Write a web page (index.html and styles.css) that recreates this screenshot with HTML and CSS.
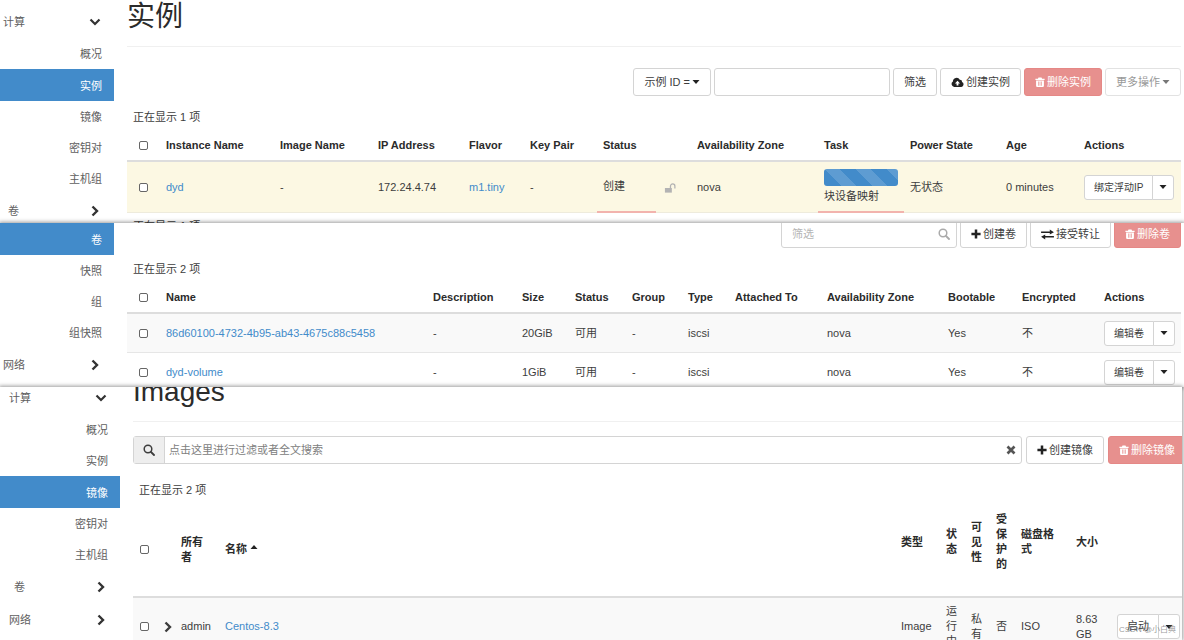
FILE: index.html
```html
<!DOCTYPE html>
<html lang="zh-CN">
<head>
<meta charset="utf-8">
<title>实例</title>
<link rel="stylesheet" href="styles.css">
</head>
<body>
<svg class="defs" aria-hidden="true">
  <symbol id="down" viewBox="0 0 12 12"><path d="M1.500 3.500 6 8l4.500-4.500" fill="none" stroke="currentColor" stroke-width="2.200"/></symbol>
  <symbol id="right" viewBox="0 0 12 12"><path d="M3.500 1.500 8 6l-4.500 4.500" fill="none" stroke="currentColor" stroke-width="2.400"/></symbol>
  <symbol id="caret" viewBox="0 0 8 4"><path d="M0.500 0h7L4 4z" fill="currentColor"/></symbol>
  <symbol id="trash" viewBox="0 0 12 12"><path d="M4.200 0.500h3.600l.7 1.500H11.500v1.700H.5V2h3zM1.300 4.200h9.400v6.300q0 1.500-1.300 1.500H2.600q-1.300 0-1.300-1.500zM3.600 5.500v5h.8v-5zm2 0v5h.8v-5zm2 0v5h.8v-5z" fill="currentColor" fill-rule="evenodd"/></symbol>
  <symbol id="cloud" viewBox="0 0 14 12"><path d="M3.300 10.800A3.200 3.200 0 0 1 2 4.900 4 4 0 0 1 9.500 3a2.400 2.400 0 0 1 2.500 2.500 2.800 2.800 0 0 1-.8 5.300zM7 4 4.200 7H6v2.200h2V7h1.800z" fill="currentColor" fill-rule="evenodd"/></symbol>
  <symbol id="plus" viewBox="0 0 12 12"><path d="M6 .5v11M.5 6h11" stroke="currentColor" stroke-width="3"/></symbol>
  <symbol id="swap" viewBox="0 0 14 12"><path d="M0 2.600h9.500V.500L14 3.500 9.500 6V4.400H0zM14 9.400H4.500v2.100L0 8.500 4.500 6v1.600H14z" fill="currentColor"/></symbol>
  <symbol id="search" viewBox="0 0 12 12"><circle cx="5" cy="5" r="3.800" fill="none" stroke="currentColor" stroke-width="1.500"/><path d="m8 8 3 3" stroke="currentColor" stroke-width="1.800" stroke-linecap="round"/></symbol>
  <symbol id="close" viewBox="0 0 12 12"><path d="m2.500 2.500 7 7m0-7-7 7" stroke="currentColor" stroke-width="2.700"/></symbol>
  <symbol id="unlock" viewBox="0 0 13 12"><path d="M1 6h7.500v5H1z" fill="currentColor"/><path d="M7 6V4a2.400 2.400 0 0 1 4.800 0v2.500" fill="none" stroke="currentColor" stroke-width="1.400"/></symbol>
</svg>

<section class="panel">
  <nav class="side" aria-label="实例导航">
    <button class="group">计算<svg class="ic"><use href="#down"/></svg></button>
    <a href="#">概况</a>
    <a href="#" class="active">实例</a>
    <a href="#">镜像</a>
    <a href="#">密钥对</a>
    <a href="#">主机组</a>
    <button class="group sub">卷<svg class="ic"><use href="#right"/></svg></button>
  </nav>
  <main class="main">
    <h1>实例</h1>
    <div class="toolbar">
      <button class="btn">示例 ID =<svg class="caret"><use href="#caret"/></svg></button>
      <input class="field" type="text" aria-label="示例 ID">
      <button class="btn">筛选</button>
      <button class="btn"><svg class="ic wide"><use href="#cloud"/></svg>创建实例</button>
      <button class="btn danger"><svg class="ic small"><use href="#trash"/></svg>删除实例</button>
      <button class="btn muted">更多操作<svg class="caret"><use href="#caret"/></svg></button>
    </div>
    <p class="count">正在显示 1 项</p>
    <table class="instances">
      <colgroup><col class="pick"><col class="name"><col class="image"><col class="ip"><col class="flavor"><col class="key"><col class="status"><col class="lock"><col class="zone"><col class="task"><col class="power"><col class="age"><col class="actions"></colgroup>
      <thead><tr><th><input type="checkbox" aria-label="全选实例"></th><th>Instance Name</th><th>Image Name</th><th>IP Address</th><th>Flavor</th><th>Key Pair</th><th>Status</th><th></th><th>Availability Zone</th><th>Task</th><th>Power State</th><th>Age</th><th>Actions</th></tr></thead>
      <tbody><tr class="warn"><td><input type="checkbox" aria-label="选择 dyd"></td><td><a href="#">dyd</a></td><td>-</td><td>172.24.4.74</td><td><a href="#">m1.tiny</a></td><td>-</td><td class="busy">创建</td><td class="lockcell"><svg class="ic"><use href="#unlock"/></svg></td><td>nova</td><td class="busy"><div class="progress"></div>块设备映射</td><td>无状态</td><td>0 minutes</td><td><div class="split"><button>绑定浮动IP</button><button aria-label="更多"><svg class="caret"><use href="#caret"/></svg></button></div></td></tr></tbody>
    </table>
    <p class="count foot">正在显示 1 项</p>
  </main>
</section>

<section class="panel volumes-panel">
  <nav class="side" aria-label="卷导航">
    <a href="#" class="active">卷</a>
    <a href="#">快照</a>
    <a href="#">组</a>
    <a href="#">组快照</a>
    <button class="group">网络<svg class="ic"><use href="#right"/></svg></button>
  </nav>
  <main class="main">
    <div class="toolbar">
      <div class="field search"><input type="text" placeholder="筛选" aria-label="筛选卷"><svg class="ic"><use href="#search"/></svg></div>
      <button class="btn"><svg class="ic small"><use href="#plus"/></svg>创建卷</button>
      <button class="btn"><svg class="ic wide"><use href="#swap"/></svg>接受转让</button>
      <button class="btn danger"><svg class="ic small"><use href="#trash"/></svg>删除卷</button>
    </div>
    <p class="count">正在显示 2 项</p>
    <table class="volumes">
      <colgroup><col class="pick"><col class="name"><col class="desc"><col class="size"><col class="status"><col class="grp"><col class="type"><col class="attached"><col class="zone"><col class="boot"><col class="enc"><col class="actions"></colgroup>
      <thead><tr><th><input type="checkbox" aria-label="全选卷"></th><th>Name</th><th>Description</th><th>Size</th><th>Status</th><th>Group</th><th>Type</th><th>Attached To</th><th>Availability Zone</th><th>Bootable</th><th>Encrypted</th><th>Actions</th></tr></thead>
      <tbody>
        <tr class="odd"><td><input type="checkbox" aria-label="选择卷 1"></td><td><a href="#">86d60100-4732-4b95-ab43-4675c88c5458</a></td><td>-</td><td>20GiB</td><td>可用</td><td>-</td><td>iscsi</td><td></td><td>nova</td><td>Yes</td><td>不</td><td><div class="split"><button>编辑卷</button><button aria-label="更多"><svg class="caret"><use href="#caret"/></svg></button></div></td></tr>
        <tr><td><input type="checkbox" aria-label="选择 dyd-volume"></td><td><a href="#">dyd-volume</a></td><td>-</td><td>1GiB</td><td>可用</td><td>-</td><td>iscsi</td><td></td><td>nova</td><td>Yes</td><td>不</td><td><div class="split"><button>编辑卷</button><button aria-label="更多"><svg class="caret"><use href="#caret"/></svg></button></div></td></tr>
      </tbody>
    </table>
  </main>
</section>

<section class="panel images-panel">
  <nav class="side" aria-label="镜像导航">
    <button class="group">计算<svg class="ic"><use href="#down"/></svg></button>
    <a href="#">概况</a>
    <a href="#">实例</a>
    <a href="#" class="active">镜像</a>
    <a href="#">密钥对</a>
    <a href="#">主机组</a>
    <button class="group sub">卷<svg class="ic"><use href="#right"/></svg></button>
    <button class="group">网络<svg class="ic"><use href="#right"/></svg></button>
  </nav>
  <main class="main">
    <h1>Images</h1>
    <div class="toolbar">
      <div class="filter"><span class="addon"><svg class="ic"><use href="#search"/></svg></span><input type="text" placeholder="点击这里进行过滤或者全文搜索" aria-label="过滤镜像"><button class="clear" aria-label="清除"><svg class="ic"><use href="#close"/></svg></button></div>
      <button class="btn"><svg class="ic small"><use href="#plus"/></svg>创建镜像</button>
      <button class="btn danger"><svg class="ic small"><use href="#trash"/></svg>删除镜像</button>
    </div>
    <p class="count">正在显示 2 项</p>
    <table class="images">
      <colgroup><col class="pick"><col class="expand"><col class="owner"><col class="name"><col class="type"><col class="narrow"><col class="narrow"><col class="narrow"><col class="format"><col class="size"><col class="actions"></colgroup>
      <thead><tr><th><input type="checkbox" aria-label="全选镜像"></th><th></th><th>所有者</th><th>名称 <svg class="caret up"><use href="#caret"/></svg></th><th class="sort">类型</th><th class="sort">状态</th><th class="sort">可见性</th><th class="sort">受保护的</th><th class="sort">磁盘格式</th><th class="sort">大小</th><th></th></tr></thead>
      <tbody><tr class="odd"><td><input type="checkbox" aria-label="选择 Centos-8.3"></td><td><svg class="ic"><use href="#right"/></svg></td><td>admin</td><td><a href="#">Centos-8.3</a></td><td>Image</td><td>运行中</td><td>私有</td><td>否</td><td>ISO</td><td>8.63 GB</td><td><div class="split"><button>启动</button><button aria-label="更多"><svg class="caret"><use href="#caret"/></svg></button></div></td></tr></tbody>
    </table>
  </main>
</section>
<div class="watermark">CSDN @小白典</div>
</body>
</html>
```
FILE: styles.css
```css
* { box-sizing: border-box; }

body {
  margin: 0;
  height: 100vh;
  min-height: 640px;
  display: grid;
  grid-template-rows: 223px 164px 1fr;
  overflow: hidden;
  position: relative;
  background: #fff;
  color: #3d3d3d;
  font: 11px/15px "Liberation Sans", "Noto Sans CJK SC", sans-serif;
}

button, input { font: inherit; color: inherit; }
a { color: #428bca; text-decoration: none; }
.defs { position: absolute; width: 0; height: 0; }

.ic { width: 12px; height: 12px; flex: none; }
.ic.small { width: 10px; height: 10px; }
.ic.wide { width: 13px; height: 11px; }
.caret { width: 8px; height: 4px; flex: none; color: #222; }
.caret.up { transform: rotate(180deg); vertical-align: 4px; }

/* Panels */
.panel {
  display: flex;
  align-items: flex-start;
  overflow: hidden;
  min-height: 0;
  background: #fff;
  position: relative;
}
.volumes-panel, .images-panel { box-shadow: 0 0 4px 1px rgba(0, 0, 0, 0.4); }
.images-panel { margin-right: 2px; }

/* Sidebar */
.side {
  width: 114px;
  flex: none;
  display: flex;
  flex-direction: column;
  padding-top: 5px;
}
.volumes-panel .side { padding-top: 0; }
.images-panel .side { width: 120px; padding-top: 0; margin-top: -6px; }
.side a {
  height: 31px;
  padding: 2px 12px 0 0;
  display: flex;
  align-items: center;
  justify-content: flex-end;
  color: #606060;
}
.side a.active { height: 32px; background: #428bca; color: #fff; }
.group {
  height: 33px;
  border: 0;
  background: none;
  padding: 1px 13px 0 3px;
  display: flex;
  align-items: center;
  justify-content: space-between;
  color: #606060;
}
.group.sub { padding-left: 8px; }
.images-panel .group { padding-left: 9px; }
.images-panel .group.sub { padding-left: 14px; }
.group .ic { color: #333; }

/* Main column */
.main { flex: 1; min-width: 0; margin: 0 3px 0 13px; }
.volumes-panel .main { margin-top: -3px; }
.images-panel .main { margin-top: -12px; margin-right: 0; }

h1 {
  margin: 0 0 21px;
  padding: 1px 0 13px;
  border-bottom: 1px solid #f0f0f0;
  font-size: 28px;
  line-height: 32px;
  font-weight: 400;
  color: #2b2b2b;
}
.images-panel h1 { margin-bottom: 14px; }

.toolbar { display: flex; justify-content: flex-end; gap: 3px; }
.images-panel .toolbar { gap: 4px; margin-right: -4px; }
.btn {
  height: 28px;
  padding: 0 10px;
  border: 1px solid #d4d4d4;
  border-radius: 3px;
  background: #fff;
  display: flex;
  align-items: center;
  gap: 2px;
  white-space: nowrap;
  flex: none;
}
.btn .ic { color: #222; }
.btn.danger { background: #e7908e; border-color: #e58886; color: #fff; }
.btn.danger .ic { color: #fff; }
.btn.muted { color: #999; border-color: #e2e2e2; }
.btn.muted .caret { color: #777; }

.field {
  width: 176px;
  height: 28px;
  border: 1px solid #d4d4d4;
  border-radius: 3px;
  background: #fff;
}
.search { display: flex; align-items: center; padding: 0 6px 0 10px; color: #aaa; }
.search input, .filter input {
  flex: 1;
  min-width: 0;
  border: 0;
  padding: 0;
  background: none;
  outline: 0;
}
.search input::placeholder { color: #b5b5b5; }

.filter {
  flex: 1;
  height: 28px;
  display: flex;
  align-items: center;
  border: 1px solid #d4d4d4;
  border-radius: 3px;
}
.filter input::placeholder { color: #808080; }
.addon {
  width: 31px;
  align-self: stretch;
  display: flex;
  align-items: center;
  justify-content: center;
  margin-right: 4px;
  background: #eee;
  border-right: 1px solid #d4d4d4;
}
.clear { border: 0; background: none; padding: 0 4px; display: flex; color: #555; }

.count { margin: 0; padding: 13px 6px 6px; line-height: 16px; }
.count.foot { padding: 5px 6px 0; }
.images-panel .count { padding: 18px 6px 5px; }

/* Tables */
table { width: 100%; table-layout: fixed; border-collapse: separate; border-spacing: 0; }
th {
  height: 31px;
  padding: 0 6px;
  text-align: left;
  color: #2b2b2b;
  border-bottom: 2px solid #ddd;
}
td { height: 39px; padding: 0 6px; border-bottom: 1px solid #e6e6e6; }
.odd td { background: #f9f9f9; }
.warn td { height: 51px; background: #fcf8e3; border-bottom-color: #eeebdc; }
.warn .busy { border-bottom: 2px solid #f2b3ad; }
td svg, th svg { vertical-align: middle; }

input[type="checkbox"] {
  appearance: none;
  display: block;
  width: 9px;
  height: 9px;
  margin: 0 0 0 6px;
  border: 1px solid #666;
  border-radius: 2px;
  background: #fff;
}

.pick { width: 33px; }
.instances .name { width: 114px; }
.instances .image { width: 98px; }
.instances .ip { width: 91px; }
.instances .flavor { width: 61px; }
.instances .key { width: 73px; }
.instances .status { width: 59px; }
.instances .lock { width: 35px; }
.instances .zone { width: 127px; }
.instances .task { width: 86px; }
.instances .power { width: 96px; }
.instances .age { width: 78px; }
.instances .actions { width: 103px; }

.volumes .name { width: 267px; }
.volumes .desc { width: 89px; }
.volumes .size { width: 53px; }
.volumes .status { width: 57px; }
.volumes .grp { width: 56px; }
.volumes .type { width: 47px; }
.volumes .attached { width: 92px; }
.volumes .zone { width: 121px; }
.volumes .boot { width: 74px; }
.volumes .enc { width: 82px; }
.volumes .actions { width: 83px; }

.images .pick { width: 26px; }
.images .expand { width: 16px; }
.images .owner { width: 44px; }
.images .type { width: 45px; }
.images .narrow { width: 25px; }
.images .format { width: 55px; }
.images .size { width: 41px; }
.images .actions { width: 71px; }
.images th { padding: 9px 6px; height: 92px; }
.images th.sort { padding-bottom: 24px; }
.images td { padding: 6px; }
.images td:nth-child(2) { padding: 0 0 0 3px; }
.images td:last-child { padding-right: 0; }
.images input[type="checkbox"] { margin-left: 1px; }
.images .split { font-size: 11px; }

.lockcell { padding-left: 8px; color: #b3b3b3; }
.progress {
  height: 17px;
  margin-bottom: 3px;
  border-radius: 3px;
  background: #428bca linear-gradient(45deg, rgba(255, 255, 255, 0.15) 25%, transparent 25%, transparent 50%, rgba(255, 255, 255, 0.15) 50%, rgba(255, 255, 255, 0.15) 75%, transparent 75%) 0 0 / 31px 31px;
}

.split { display: flex; font-size: 10px; }
.split button {
  height: 25px;
  padding: 0 9px;
  border: 1px solid #d4d4d4;
  border-radius: 3px 0 0 3px;
  background: #fff;
  display: flex;
  align-items: center;
  white-space: nowrap;
}
.split button + button { padding: 0 6px; margin-left: -1px; border-radius: 0 3px 3px 0; }

.watermark {
  position: absolute;
  right: 8px;
  bottom: 4px;
  font-size: 8px;
  line-height: 12px;
  color: rgba(120, 120, 120, 0.75);
}
```
